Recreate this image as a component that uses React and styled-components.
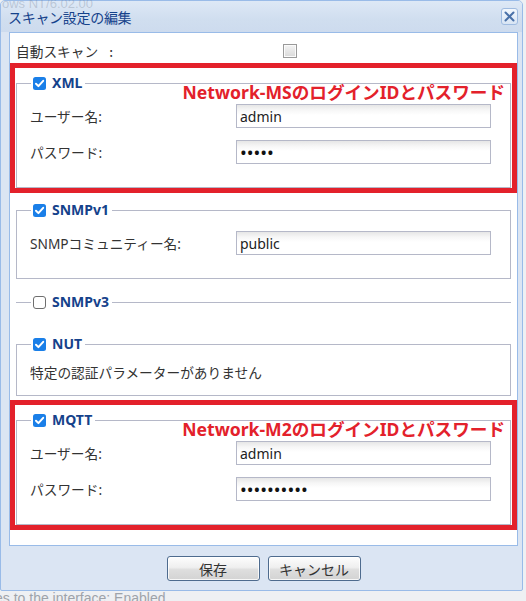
import React from 'react';
import styled, { createGlobalStyle, css } from 'styled-components';

const Global = createGlobalStyle`
  html, body { margin: 0; padding: 0; }
  body {
    background: #eef0f3;
    font-family: "Noto Sans", "Noto Sans CJK JP", sans-serif;
  }
  * { box-sizing: border-box; }
`;

const Page = styled.div`
  position: relative;
  width: 526px;
  height: 601px;
  overflow: hidden;
  background: #eef0f3;
`;

const BackdropText = styled.div`
  position: absolute;
  left: -5px;
  top: 590px;
  font: 14px "Liberation Sans", Arial, sans-serif;
  color: #9ea3aa;
  white-space: nowrap;
`;

const Window = styled.div`
  position: relative;
  z-index: 1;
  width: 523px;
  border: 1px solid #99bbe8;
  border-radius: 5px 5px 2px 2px;
  background: #dbe5f3;
  padding: 0 4px 0 8px;
`;

const Header = styled.div`
  position: relative;
  height: 31px;
  margin: 0 -4px 0 -8px;
  padding: 0 4px 0 7px;
  display: flex;
  align-items: center;
  justify-content: space-between;
  background: linear-gradient(#dde8f6, #d0deef 60%, #cddbee);
  border-radius: 4px 4px 0 0;
`;

const GhostText = styled.span`
  position: absolute;
  left: 1px;
  top: -5px;
  font: 13px "Liberation Sans", Arial, sans-serif;
  color: rgba(110, 122, 142, 0.3);
  white-space: nowrap;
  pointer-events: none;
`;

const Title = styled.span`
  font: 14px "Noto Sans CJK JP", sans-serif;
  color: #15428b;
  letter-spacing: -0.3px;
`;

const CloseButton = styled.button`
  width: 17px;
  height: 17px;
  padding: 0;
  display: flex;
  align-items: center;
  justify-content: center;
  border: 1px solid #9fbbe0;
  border-radius: 3px;
  background: linear-gradient(#f2f7fd, #d8e5f4);
`;

const Body = styled.div`
  display: flex;
  flex-direction: column;
  border: 1px solid #99bbe8;
  background: #fff;
  padding: 8px 6px 15px;
`;

const AutoRow = styled.div`
  display: flex;
  align-items: center;
  height: 20px;
`;

const AutoLabel = styled.span`
  width: 267px;
  font: 13.7px "Noto Sans CJK JP", sans-serif;
  word-spacing: 8px;
  color: #333;
`;

const OldCheck = styled.span`
  width: 14px;
  height: 14px;
  border: 1px solid #9a9a9a;
  background: linear-gradient(#f4f4f4, #d9d9d9);
  box-shadow: inset 0 0 0 1px #fbfbfb;
`;

const Highlight = styled.div`
  position: relative;
  display: flex;
  flex-direction: column;
  margin: ${p => p.$mt}px -6px ${p => p.$mb}px;
  border: 5px solid #e3212b;
  padding: 8px 1px 0;
`;

const Annotation = styled.span`
  position: absolute;
  top: 15px;
  right: 7px;
  font: bold 17.6px/18px "Noto Sans", "Noto Sans CJK JP", sans-serif;
  color: #e3212b;
  white-space: nowrap;
  z-index: 2;
`;

const Group = styled.div`
  margin-top: ${p => p.$mt ?? 23}px;
  border: 1px solid #b5b8c8;
  ${p => p.$collapsed && css`
    border-width: 1px 0 0;
    padding-bottom: 12px;
  `}
`;

const Legend = styled.div`
  display: flex;
  align-items: center;
  gap: 6px;
  width: fit-content;
  height: 14px;
  margin: -8px 0 0 ${p => (p.$collapsed ? 15 : 14)}px;
  padding: 0 3px 0 2px;
  background: #fff;
  font: bold 14px/14px "Noto Sans", sans-serif;
  color: #15428b;
`;

const GroupContent = styled.div`
  display: flex;
  flex-direction: column;
  gap: 12px;
  padding: 14px 19px ${p => p.$pb ?? 23}px 13px;
`;

const FieldRow = styled.div`
  display: flex;
  align-items: center;
`;

const FieldLabel = styled.label`
  flex: none;
  width: 206px;
  font: 13.7px "Noto Sans", "Noto Sans CJK JP", sans-serif;
  color: #333;
`;

const TextInput = styled.input`
  flex: 1;
  width: 0;
  min-width: 0;
  height: 24px;
  border: 1px solid #b5b8c8;
  padding: 0 3px;
  font: 14px "Noto Sans", sans-serif;
  color: #222;
  background: linear-gradient(#e6e6e6, #f6f6f6 5px, #fff 10px);
  outline: none;
  ${p => p.type === 'password' && css`
    font-size: 18px;
    color: #111;
  `}
`;

const Note = styled.div`
  font: 13.7px/14px "Noto Sans CJK JP", sans-serif;
  color: #333;
`;

const Footer = styled.div`
  display: flex;
  justify-content: center;
  gap: 8px;
  padding: 10px 0 9px;
`;

const Button = styled.button`
  width: 93px;
  height: 25px;
  border: 1px solid #4e6b8e;
  border-radius: 3px;
  background: linear-gradient(#fdfdfd, #efefef 45%, #dedede 55%, #d3d3d3);
  box-shadow: inset 0 0 0 1px rgba(255, 255, 255, 0.8);
  font: 14px "Noto Sans CJK JP", sans-serif;
  color: #333;
  padding: 0;
`;

const BoxSvg = styled.svg`
  display: block;
  flex: none;
`;

function CheckBox({ checked }) {
  if (checked) {
    return (
      <BoxSvg width="13" height="13" viewBox="0 0 13 13">
        <rect x="0" y="0" width="13" height="13" rx="2.5" fill="#1a7fe8" />
        <path d="M3 6.8 L5.4 9.1 L10.2 3.8" fill="none" stroke="#fff" strokeWidth="2" strokeLinecap="round" strokeLinejoin="round" />
      </BoxSvg>
    );
  }
  return (
    <BoxSvg width="13" height="13" viewBox="0 0 13 13">
      <rect x="0.5" y="0.5" width="12" height="12" rx="2.5" fill="#fff" stroke="#6e6e6e" />
    </BoxSvg>
  );
}

function FieldSet({ title, checked = true, collapsed, mt, pb, children }) {
  return (
    <Group $mt={mt} $collapsed={collapsed}>
      <Legend $collapsed={collapsed}>
        <CheckBox checked={checked} />
        <span>{title}</span>
      </Legend>
      {!collapsed && <GroupContent $pb={pb}>{children}</GroupContent>}
    </Group>
  );
}

function Field({ label, value, type = 'text' }) {
  return (
    <FieldRow>
      <FieldLabel>{label}</FieldLabel>
      <TextInput type={type} defaultValue={value} readOnly />
    </FieldRow>
  );
}

export default function App() {
  return (
    <Page>
      <Global />
      <BackdropText>es to the interface: Enabled</BackdropText>
      <Window>
        <Header>
          <GhostText>ows NT/6.02.00</GhostText>
          <Title>スキャン設定の編集</Title>
          <CloseButton aria-label="close">
            <svg width="11" height="11" viewBox="0 0 11 11">
              <path d="M1.5 1.5 L9.5 9.5 M9.5 1.5 L1.5 9.5" stroke="#4a71a8" strokeWidth="2" strokeLinecap="round" />
            </svg>
          </CloseButton>
        </Header>
        <Body>
          <AutoRow>
            <AutoLabel>自動スキャン :</AutoLabel>
            <OldCheck />
          </AutoRow>

          <Highlight $mt={2} $mb={10}>
            <Annotation>Network-MSのログインIDとパスワード</Annotation>
            <FieldSet title="XML" mt={7}>
              <Field label="ユーザー名:" value="admin" />
              <Field label="パスワード:" value="admin" type="password" />
            </FieldSet>
          </Highlight>

          <FieldSet title="SNMPv1" mt={7}>
            <Field label="SNMPコミュニティー名:" value="public" />
          </FieldSet>

          <FieldSet title="SNMPv3" checked={false} collapsed />

          <FieldSet title="NUT" pb={16}>
            <Note>特定の認証パラメーターがありません</Note>
          </FieldSet>

          <Highlight $mt={4} $mb={0}>
            <Annotation>Network-M2のログインIDとパスワード</Annotation>
            <FieldSet title="MQTT" mt={7}>
              <Field label="ユーザー名:" value="admin" />
              <Field label="パスワード:" value="adminadmin" type="password" />
            </FieldSet>
          </Highlight>
        </Body>
        <Footer>
          <Button>保存</Button>
          <Button>キャンセル</Button>
        </Footer>
      </Window>
    </Page>
  );
}
